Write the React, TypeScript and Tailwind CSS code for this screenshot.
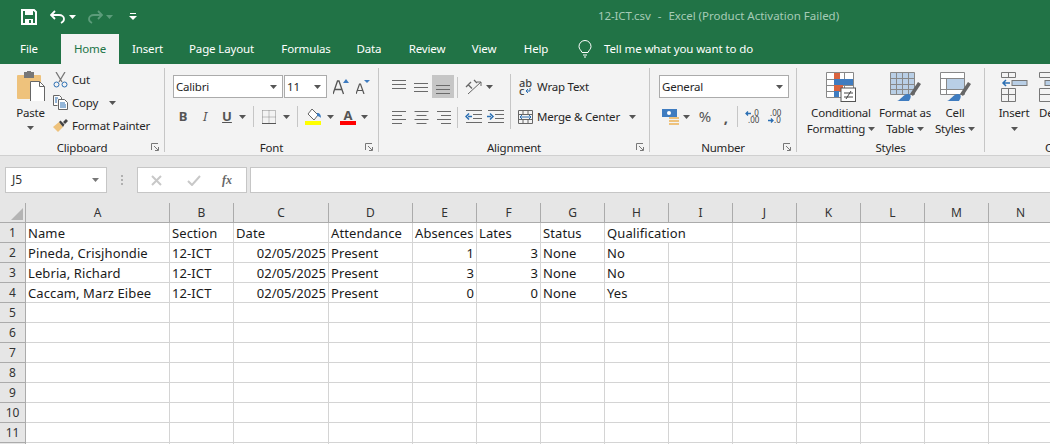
import React from "react";

const Caret = ({ c = "#555", className = "" }: { c?: string; className?: string }) => (
  <svg width="7" height="4" viewBox="0 0 7 4" className={"shrink-0 " + className}><path d="M0 0h7L3.500 4z" fill={c} /></svg>
);

const Launcher = () => (
  <svg width="9" height="9" viewBox="0 0 9 9" className="shrink-0"><path d="M.5 7V.5H7M3 3l4 4M4 7.500h3.500V4" fill="none" stroke="#777" /></svg>
);

const Lines = ({ w = [14, 14, 14], gap = 4, x = "left" }: { w?: number[]; gap?: number; x?: string }) => (
  <svg width="15" height="14" viewBox="0 0 15 14" className="shrink-0">
    {w.map((l, i) => (
      <rect key={i} x={x === "left" ? 0 : x === "right" ? 15 - l : (15 - l) / 2} y={1 + i * gap} width={l} height="1" fill="#6a6a6a" />
    ))}
  </svg>
);

const VSep = ({ h = "h-[21px]", m = "mx-0" }: { h?: string; m?: string }) => <div className={"w-px bg-[#c6c6c6] shrink-0 " + h + " " + m} />;

function Group({ label, w, children, launcher = true, sep = true }: { label: string; w: string; children: React.ReactNode; launcher?: boolean; sep?: boolean }) {
  return (
    <div className={"relative flex h-full shrink-0 flex-col " + w + (sep ? " border-r border-[#c6c6c6]" : "")}>
      <div className="h-[75px] shrink-0">{children}</div>
      <div className="flex h-[9px] items-center justify-center text-[11.5px] leading-[15px] tracking-[-0.2px] text-[#262626]">{label}</div>
      {launcher && <div className="absolute bottom-[0px] right-[4px]"><Launcher /></div>}
    </div>
  );
}

const Combo = ({ w, text, textCls = "" }: { w: string; text: string; textCls?: string }) => (
  <div className={"flex h-[23px] items-center justify-between border border-[#ababab] bg-white pl-[2px] pr-[5px] " + w}>
    <span className={"text-[11.5px] tracking-[-0.2px] text-[#262626] " + textCls}>{text}</span>
    <Caret />
  </div>
);

function ClipboardGroup() {
  return (
    <Group label="Clipboard" w="w-[165px]">
      <div className="flex h-full">
        <div className="ml-[15px] flex w-[31px] flex-col items-center pt-[3px]">
          <svg width="31" height="30" viewBox="0 0 31 30" className="shrink-0">
            <rect x="2" y="4" width="24" height="24" rx="1" fill="#eec27c" />
            <rect x="9" y="1" width="10" height="6" fill="#777" />
            <rect x="12" y="0" width="4" height="3" fill="#777" />
            <path d="M15.500 10.500h9l5 5v15h-14z" fill="#fff" stroke="#666" />
            <path d="M24.500 10.500v5h5" fill="none" stroke="#666" />
          </svg>
          <span className="mt-[4px] text-[11.5px] leading-[16px] tracking-[-0.2px] text-[#262626]">Paste</span>
          <Caret className="mt-[5px]" />
        </div>
        <div className="ml-[7px] flex flex-col pt-[0px] text-[11.500px] tracking-[-0.2px] text-[#262626]">
          <div className="flex h-[23px] items-center gap-[4px]">
            <svg width="15" height="16" viewBox="0 0 15 16" className="shrink-0">
              <path d="M3 0l6 10M12 0L6 10" stroke="#777" strokeWidth="1.300" fill="none" />
              <circle cx="3.500" cy="12.500" r="2.500" fill="none" stroke="#2b6fb3" />
              <circle cx="11.500" cy="12.500" r="2.500" fill="none" stroke="#2b6fb3" />
            </svg>
            <span>Cut</span>
          </div>
          <div className="flex h-[23px] items-center gap-[4px]">
            <svg width="15" height="15" viewBox="0 0 15 15" className="shrink-0">
              <path d="M.5.500h6l2 2v2M.5.500v10h4" fill="#fff" stroke="#666" />
              <path d="M5.500 4.500h6l3 3v7h-9z" fill="#fff" stroke="#666" />
              <path d="M7 8h5M7 10h6M7 12h6M2 3h3M2 5h2M2 7h2" stroke="#2b6fb3" />
            </svg>
            <span>Copy</span>
            <Caret className="ml-[7px]" />
          </div>
          <div className="flex h-[23px] items-center gap-[4px]">
            <svg width="15" height="15" viewBox="0 0 15 15" className="shrink-0">
              <path d="M0 9l6-5 4 5-5 5z" fill="#eec27c" />
              <path d="M6 4l1.500-1.500 4 4L10 9zM10 4l3-3 2 2-3 3z" fill="#444" />
            </svg>
            <span>Format Painter</span>
          </div>
        </div>
      </div>
    </Group>
  );
}

function FontGroup() {
  return (
    <Group label="Font" w="w-[214px]">
      <div className="flex flex-col pl-[8px] pt-[7px]">
        <div className="flex h-[23px] items-center">
          <Combo w="w-[110px]" text="Calibri" />
          <Combo w="w-[43px] ml-px" text="11" />
          <svg width="17" height="16" viewBox="0 0 17 16" className="ml-[6px] shrink-0">
            <path d="M0 15L4.500 2h1.500L10.500 15M2 10.500h7" fill="none" stroke="#555" strokeWidth="1.300" />
            <path d="M10 4l3-4 3 4z" fill="#3f7cc0" />
          </svg>
          <svg width="14" height="14" viewBox="0 0 14 14" className="ml-[6px] shrink-0">
            <path d="M0 14L3.500 4h1L8 14M1.500 10.500h5" fill="none" stroke="#555" strokeWidth="1.200" />
            <path d="M8 0h6l-3 3z" fill="#3f7cc0" />
          </svg>
        </div>
        <div className="mt-[7px] flex h-[23px] items-center">
          <span className="ml-[3px] w-[14px] text-center text-[13px] font-bold text-[#555]">B</span>
          <span className="ml-[8px] w-[14px] text-center text-[13px] italic text-[#555]">I</span>
          <span className="ml-[8px] w-[14px] text-center text-[13px] font-bold text-[#555] underline">U</span>
          <Caret className="ml-[5px]" />
          <VSep m="ml-[7px]" />
          <svg width="14" height="14" viewBox="0 0 14 14" className="ml-[8px] shrink-0">
            <path d="M.5.500h13v13M.5.500v13M7 .5v13M.5 7h13" fill="none" stroke="#888" strokeDasharray="1 1" />
            <path d="M0 13.500h14" stroke="#555" />
          </svg>
          <Caret className="ml-[7px]" />
          <VSep m="ml-[7px]" />
          <svg width="17" height="17" viewBox="0 0 17 17" className="ml-[7px] shrink-0">
            <path d="M7 1l6 6-4 5-6-6z" fill="#fff" stroke="#666" />
            <path d="M12 5c3 0 4 2 4 5-1-1-2-2-4-2z" fill="#3f7cc0" />
            <rect x="0" y="13" width="16" height="4" fill="#ffff00" />
          </svg>
          <Caret className="ml-[5px]" />
          <div className="ml-[6px] flex w-[16px] shrink-0 flex-col items-center">
            <span className="text-[13px] font-bold leading-[12px] text-[#555]">A</span>
            <div className="h-[4px] w-full bg-[#ff0000]" />
          </div>
          <Caret className="ml-[5px]" />
        </div>
      </div>
    </Group>
  );
}

const Btn = ({ children, active = false, w = "w-[22px]" }: { children: React.ReactNode; active?: boolean; w?: string }) => (
  <div className={"flex h-[23px] shrink-0 items-center justify-center " + w + (active ? " bg-[#c6c6c6]" : "")}>{children}</div>
);

const Indent = ({ right = false }: { right?: boolean }) => (
  <svg width="17" height="14" viewBox="0 0 17 14" className="shrink-0">
    <path d="M1 .5h16M8 4.500h9M8 8.500h9M1 12.500h16" stroke="#6a6a6a" />
    {right ? <path d="M0 6.500h4M3 3.500l3 3-3 3" stroke="#2b6fb3" strokeWidth="1.500" fill="none" /> : <path d="M7 6.500H3M4 3.500l-3 3 3 3" stroke="#2b6fb3" strokeWidth="1.500" fill="none" />}
  </svg>
);

function AlignmentGroup() {
  return (
    <Group label="Alignment" w="w-[271px]">
      <div className="flex h-full pl-[9px] pt-[7px]">
        <div className="flex flex-col">
          <div className="flex items-center">
            <Btn><svg width="15" height="14" viewBox="0 0 15 14"><path d="M0 .5h14M0 4.500h14M0 8.500h14" stroke="#6a6a6a" /></svg></Btn>
            <Btn><svg width="15" height="14" viewBox="0 0 15 14"><path d="M0 3.500h14M0 7.500h14M0 11.500h14" stroke="#6a6a6a" /></svg></Btn>
            <Btn active><svg width="15" height="14" viewBox="0 0 15 14"><path d="M0 5.500h14M0 9.500h14M0 13.500h14" stroke="#6a6a6a" /></svg></Btn>
          </div>
          <div className="mt-[7px] flex items-center">
            <Btn><Lines w={[14, 10, 14, 10]} /></Btn>
            <Btn><Lines w={[14, 10, 14, 10]} x="center" /></Btn>
            <Btn><Lines w={[14, 10, 14, 10]} x="right" /></Btn>
          </div>
        </div>
        <div className="ml-[3px] mt-[1px] flex flex-col">
          <div className="flex h-[22px] items-center"><VSep /></div>
          <div className="mt-[8px] flex h-[22px] items-center"><VSep /></div>
        </div>
        <div className="flex w-[52px] flex-col pl-[7px]">
          <div className="flex h-[23px] items-center gap-[3px]">
            <svg width="18" height="16" viewBox="0 0 18 16" className="shrink-0">
              <path d="M1 8l5-5M3 5.500l4 4M9 1l3 3" stroke="#666" fill="none" strokeWidth="1.300" />
              <path d="M3 15L16 3M12 3h4v4" stroke="#666" fill="none" />
            </svg>
            <Caret />
          </div>
          <div className="mt-[7px] flex h-[23px] items-center gap-[5px]"><Indent /><Indent right /></div>
        </div>
        <div className="mt-[-1px] flex h-[55px] items-center"><VSep h="h-[55px]" /></div>
        <div className="flex flex-col pl-[7px] text-[11.500px] tracking-[-0.2px] text-[#262626]">
          <div className="flex h-[23px] items-center">
            <span className="ml-[1px] flex w-[13px] flex-col text-[11px] font-medium leading-[8px] tracking-normal text-[#444]">
              <span>ab</span>
              <span className="flex items-center gap-[1px]">c
                <svg width="6" height="6" viewBox="0 0 6 6" className="shrink-0"><path d="M5 0v3H1M3 1L1 3l2 2" stroke="#2b6fb3" fill="none" /></svg>
              </span>
            </span>
            <span className="ml-[5px]">Wrap Text</span>
          </div>
          <div className="mt-[7px] flex h-[23px] items-center">
            <svg width="15" height="14" viewBox="0 0 15 14" className="shrink-0">
              <path d="M.5.500h14v13H.5zM.5 4.500h14M.5 9.500h14M5 .5v4M10 .5v4M5 9.500v4M10 9.500v4" fill="none" stroke="#666" />
              <path d="M2 7h11M4 5l-2 2 2 2M11 5l2 2-2 2" stroke="#2b6fb3" fill="none" />
            </svg>
            <span className="ml-[4px]">Merge &amp; Center</span>
            <Caret className="ml-[9px]" />
          </div>
        </div>
      </div>
    </Group>
  );
}

function NumberGroup() {
  return (
    <Group label="Number" w="w-[147px]">
      <div className="flex flex-col pl-[9px] pt-[7px]">
        <Combo w="w-[130px]" text="General" />
        <div className="mt-[7px] flex h-[23px] items-center">
          <svg width="18" height="17" viewBox="0 0 18 17" className="ml-[3px] shrink-0">
            <rect x="0" y="1" width="15" height="8" fill="#3f7cc0" />
            <circle cx="7" cy="5" r="2" fill="#fff" />
            <rect x="7" y="9" width="10" height="2" fill="#eec27c" />
            <rect x="7" y="12" width="10" height="2" fill="#eec27c" />
            <rect x="7" y="15" width="10" height="2" fill="#eec27c" />
          </svg>
          <Caret className="ml-[3px]" />
          <span className="ml-[8px] w-[14px] text-center text-[15px] text-[#555]">%</span>
          <span className="ml-[8px] w-[12px] text-center text-[15px] font-bold leading-[10px] text-[#555]">,</span>
          <VSep m="ml-[5px]" />
          <svg width="16" height="20" viewBox="0 -3 16 20" className="ml-[7px] shrink-0">
            <path d="M6 3.500H1M3 1.500l-2 2 2 2" stroke="#2b6fb3" fill="none" strokeWidth="1.300" />
            <text x="7" y="6" fontSize="8" fontFamily="Noto Sans" fill="#444">.0</text>
            <text x="3" y="13" fontSize="8" fontFamily="Noto Sans" fill="#444">.00</text>
          </svg>
          <svg width="16" height="20" viewBox="0 -3 16 20" className="ml-[6px] shrink-0">
            <text x="3" y="6" fontSize="8" fontFamily="Noto Sans" fill="#444">.00</text>
            <path d="M1 10.500h5M4 8.500l2 2-2 2" stroke="#2b6fb3" fill="none" strokeWidth="1.300" />
            <text x="7" y="13" fontSize="8" fontFamily="Noto Sans" fill="#444">.0</text>
          </svg>
        </div>
      </div>
    </Group>
  );
}

function StylesGroup() {
  const lbl = "text-[11.500px] leading-[16px] tracking-[-0.2px] text-[#262626] whitespace-nowrap";
  return (
    <Group label="Styles" w="w-[188px]" launcher={false}>
      <div className="flex h-full pt-[4px]">
        <div className="ml-[11px] flex w-[66px] shrink-0 flex-col items-center">
          <svg width="30" height="30" viewBox="0 0 30 30" className="shrink-0">
            <path d="M.5.500h27v25H.5zM.5 7.500h27M.5 13.500h27M.5 19.500h27M8.500.5v25M18.500.5v25" fill="#fff" stroke="#888" />
            <rect x="8" y="1" width="6" height="6" fill="#d9643f" />
            <rect x="8" y="7" width="19" height="6" fill="#3f7cc0" />
            <rect x="8" y="13" width="9" height="6" fill="#d9643f" />
            <rect x="8" y="19" width="5" height="6" fill="#3f7cc0" />
            <rect x="15" y="16" width="14.500" height="13.500" fill="#fff" stroke="#555" />
            <path d="M18 21h9M18 25h9M25 19l-5 8" stroke="#444" />
          </svg>
          <span className={lbl + " mt-[3px]"}>Conditional</span>
          <span className={lbl + " flex items-center gap-[3px]"}>Formatting<Caret /></span>
        </div>
        <div className="flex w-[62px] shrink-0 flex-col items-center">
          <svg width="31" height="30" viewBox="0 0 31 30" className="shrink-0">
            <path d="M.5.500h24v22H.5zM.5 6.500h24M.5 12.500h24M.5 17.500h24M6.500.5v22M12.500.5v22M18.500.5v22" fill="#b9cfe6" stroke="#888" />
            <path d="M20 22l8-12 3 2-8 12z" fill="#666" />
            <path d="M7 29c4-1 6-7 11-7 4 0 3 4 1 7z" fill="#3f7cc0" />
          </svg>
          <span className={lbl + " mt-[3px]"}>Format as</span>
          <span className={lbl + " flex items-center gap-[3px]"}>Table<Caret /></span>
        </div>
        <div className="flex w-[38px] shrink-0 flex-col items-center">
          <svg width="31" height="30" viewBox="0 0 31 30" className="shrink-0">
            <path d="M.5.500h24v22H.5zM.5 6.500h24M.5 17.500h24M6.500 6.500v16" fill="#fff" stroke="#888" />
            <rect x="7" y="7" width="17" height="10" fill="#b9cfe6" />
            <path d="M20 22l8-12 3 2-8 12z" fill="#666" />
            <path d="M7 29c4-1 6-7 11-7 4 0 3 4 1 7z" fill="#3f7cc0" />
          </svg>
          <span className={lbl + " mt-[3px]"}>Cell</span>
          <span className={lbl + " flex items-center gap-[3px]"}>Styles<Caret /></span>
        </div>
      </div>
    </Group>
  );
}

function CellsGroup() {
  const lbl = "text-[11.500px] leading-[16px] tracking-[-0.2px] text-[#262626] whitespace-nowrap";
  return (
    <div className="flex h-full min-w-0 flex-1 flex-col overflow-hidden">
      <div className="flex h-[75px] shrink-0 pt-[4px]">
        <div className="ml-[15px] flex w-[28px] shrink-0 flex-col items-center">
          <svg width="27" height="30" viewBox="0 0 27 30" className="shrink-0">
            <path d="M.5.500h14v5H.5zM7.500.5v5M.5 16.500h14v13H.5zM.5 22.500h14M7.500 16.500v13" fill="none" stroke="#777" />
            <rect x="11" y="8.500" width="15" height="5" fill="#b9cfe6" stroke="#777" />
            <path d="M9 11H2M5 8l-3 3 3 3" stroke="#2b6fb3" strokeWidth="1.500" fill="none" />
          </svg>
          <span className={lbl + " mt-[3px]"}>Insert</span>
          <Caret className="mt-[6px]" />
        </div>
        <div className="ml-[11px] flex shrink-0 flex-col">
          <svg width="20" height="30" viewBox="0 0 20 30" className="shrink-0">
            <path d="M.5.500h14v5H.5zM.5 16.500h14v13H.5zM.5 22.500h14" fill="none" stroke="#777" />
            <rect x="6" y="8.500" width="15" height="5" fill="#b9cfe6" stroke="#777" />
          </svg>
          <span className={lbl + " mt-[3px]"}>Delete</span>
        </div>
      </div>
      <div className="flex h-[9px] items-center whitespace-nowrap pl-[60px] text-[11.500px] leading-[15px] text-[#262626]">Cells</div>
    </div>
  );
}

const cols = ["A", "B", "C", "D", "E", "F", "G", "H", "I", "J", "K", "L", "M", "N"];
const template = "grid-cols-[26px_144px_64px_95px_84px_64px_64px_64px_64px_64px_64px_64px_64px_64px_64px]";

type Cell = { t: string; r?: boolean; ov?: boolean };
const rows: Cell[][] = [
  [{ t: "Name" }, { t: "Section" }, { t: "Date" }, { t: "Attendance" }, { t: "Absences" }, { t: "Lates" }, { t: "Status" }, { t: "Qualification", ov: true }],
  [{ t: "Pineda, Crisjhondie" }, { t: "12-ICT" }, { t: "02/05/2025", r: true }, { t: "Present" }, { t: "1", r: true }, { t: "3", r: true }, { t: "None" }, { t: "No" }],
  [{ t: "Lebria, Richard" }, { t: "12-ICT" }, { t: "02/05/2025", r: true }, { t: "Present" }, { t: "3", r: true }, { t: "3", r: true }, { t: "None" }, { t: "No" }],
  [{ t: "Caccam, Marz Eibee" }, { t: "12-ICT" }, { t: "02/05/2025", r: true }, { t: "Present" }, { t: "0", r: true }, { t: "0", r: true }, { t: "None" }, { t: "Yes" }],
];

function Sheet() {
  return (
    <div className="h-[241px] overflow-hidden">
      <div className={"grid auto-rows-[20px] " + template + " text-[13px] text-[#1a1a1a]"}>
        <div className="flex h-[20px] items-end justify-end border-r border-b border-[#ababab] bg-[#e6e6e6] pb-[2px] pr-[2px]">
          <svg width="12" height="12" viewBox="0 0 12 12"><path d="M12 0v12H0z" fill="#b4b4b4" /></svg>
        </div>
        {cols.map((c) => (
          <div key={c} className="flex h-[20px] items-center justify-center border-r border-b border-[#ababab] bg-[#e6e6e6] text-[12px] text-[#333]">{c}</div>
        ))}
        {Array.from({ length: 12 }).map((_, i) => (
          <React.Fragment key={i}>
            <div className="flex h-[20px] items-center justify-center border-r border-b border-[#ababab] bg-[#e6e6e6] text-[12px] text-[#333]">{i + 1}</div>
            {cols.map((_c, j) => {
              const cell = rows[i]?.[j];
              return (
                <div key={j} className={"flex h-[20px] items-center whitespace-nowrap border-b border-[#d4d4d4] px-[2px] leading-[20px] " + (cell?.ov ? "" : "border-r ") + (cell?.r ? "justify-end" : "tracking-[0.1px]")}>
                  {cell?.t}
                </div>
              );
            })}
          </React.Fragment>
        ))}
      </div>
    </div>
  );
}

export default function App() {
  return (
    <div className="flex h-[444px] w-[1050px] flex-col overflow-hidden bg-[#e6e6e6]" style={{ fontFamily: "'Noto Sans', 'Open Sans', sans-serif" }}>
      <div className="relative flex h-[34px] shrink-0 items-center bg-[#217346]">
        <div className="flex items-center">
          <svg width="16" height="16" viewBox="0 0 16 16" className="ml-[21px] shrink-0">
            <path d="M1 1h12l2 2v12H1z" fill="none" stroke="#fff" strokeWidth="2" />
            <rect x="4" y="1" width="8" height="5" fill="#fff" />
            <rect x="4" y="10" width="8" height="5" fill="#fff" />
            <rect x="8" y="11" width="2" height="3" fill="#217346" />
          </svg>
          <svg width="16" height="14" viewBox="0 0 16 14" className="ml-[13px] shrink-0">
            <path d="M5 1L1 5l4 4M1 5h8c3 0 5 2 5 4s-1 3-3 4" fill="none" stroke="#fff" strokeWidth="1.800" />
          </svg>
          <Caret c="#fff" className="ml-[3px]" />
          <svg width="16" height="14" viewBox="0 0 16 14" className="ml-[11px] shrink-0">
            <path d="M11 1l4 4-4 4M15 5H7C4 5 2 7 2 9s1 3 3 4" fill="none" stroke="#5c9c7a" strokeWidth="1.800" />
          </svg>
          <Caret c="#5c9c7a" className="ml-[3px]" />
          <svg width="8" height="8" viewBox="0 0 8 8" className="ml-[16px] shrink-0"><path d="M1 .5h6" stroke="#fff" /><path d="M0 3h8L4 7z" fill="#fff" /></svg>
        </div>
        <div className="absolute left-[598px] top-[7px] flex whitespace-nowrap text-[11.500px] leading-[18px] text-[#a6cbb6]">
          <span className="tracking-[-0.1px]">12-ICT.csv</span>
          <span className="ml-[7px]">-</span>
          <span className="ml-[7px]">Excel (Product Activation Failed)</span>
        </div>
      </div>
      <div className="flex h-[30px] shrink-0 items-stretch bg-[#217346] text-[11.500px] tracking-[-0.15px] text-white">
        <div className="flex w-[61px] items-center justify-center pr-[3px]">File</div>
        <div className="flex w-[58px] items-center justify-center bg-[#f3f3f3] text-[#217346]">Home</div>
        <div className="flex w-[57px] items-center justify-center">Insert</div>
        <div className="flex w-[91px] items-center justify-center">Page Layout</div>
        <div className="flex w-[84px] items-center justify-center pr-[6px]">Formulas</div>
        <div className="flex w-[36px] items-center justify-center">Data</div>
        <div className="flex w-[80px] items-center justify-center">Review</div>
        <div className="flex w-[34px] items-center justify-center">View</div>
        <div className="flex w-[70px] items-center justify-center">Help</div>
        <div className="ml-[7px] flex items-center">
          <svg width="14" height="18" viewBox="0 0 14 18" className="shrink-0">
            <path d="M4 12.500C3 10 1 9 1 6.500a6 6 0 0 1 12 0C13 9 11 10 10 12.500zM5 15h4M6 17h2" fill="none" stroke="#fff" />
          </svg>
          <span className="ml-[12px] tracking-[-0.1px]">Tell me what you want to do</span>
        </div>
      </div>
      <div className="flex h-[92px] shrink-0 items-stretch border-b border-[#d0d0d0] bg-[#f3f3f3] pb-[3px] pt-[4px]">
        <ClipboardGroup />
        <FontGroup />
        <AlignmentGroup />
        <NumberGroup />
        <StylesGroup />
        <CellsGroup />
      </div>
      <div className="mt-[11px] flex h-[26px] shrink-0 items-stretch">
        <div className="ml-[5px] flex w-[102px] items-center justify-between border border-[#c6c6c6] bg-white pl-[6px] pr-[7px] text-[12px] text-[#333]">
          <span>J5</span><Caret c="#777" />
        </div>
        <div className="flex w-[30px] flex-col items-center justify-center gap-[2px]">
          <div className="h-[2px] w-[2px] bg-[#b0b0b0]" /><div className="h-[2px] w-[2px] bg-[#b0b0b0]" /><div className="h-[2px] w-[2px] bg-[#b0b0b0]" />
        </div>
        <div className="flex w-[110px] items-center border border-[#c6c6c6] bg-white">
          <svg width="11" height="11" viewBox="0 0 11 11" className="ml-[13px] shrink-0"><path d="M1 1l9 9M10 1l-9 9" stroke="#c8c8c8" strokeWidth="2" /></svg>
          <svg width="14" height="11" viewBox="0 0 14 11" className="ml-[25px] shrink-0"><path d="M1 6l4 4 8-9" stroke="#c8c8c8" strokeWidth="2" fill="none" /></svg>
          <span className="ml-[21px] text-[12px] font-bold italic text-[#666]" style={{ fontFamily: "Liberation Serif, serif" }}>fx</span>
        </div>
        <div className="ml-[3px] flex-1 border border-r-0 border-[#c6c6c6] bg-white" />
      </div>
      <div className="mt-[10px] bg-white"><Sheet /></div>
    </div>
  );
}
